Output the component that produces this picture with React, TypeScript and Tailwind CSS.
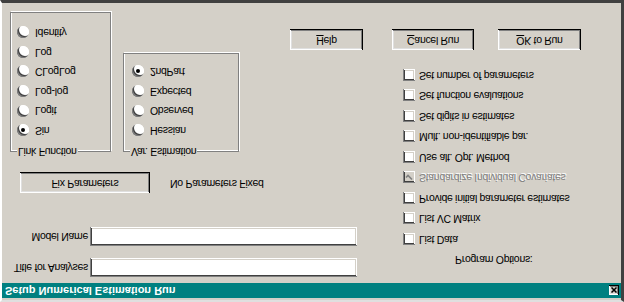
import React from 'react';

// Win95 style dialog. The reference is shown upside-down, so the whole
// window is built the normal way and flipped with -scale-y-100.

const face = 'bg-[#d4d0c8]';

const raised =
  'shadow-[inset_-1px_-1px_0_#000,inset_1px_1px_0_#fff,inset_-2px_-2px_0_#808080,inset_2px_2px_0_#dfdfdf]';
const sunken =
  'shadow-[inset_1px_1px_0_#808080,inset_-1px_-1px_0_#fff,inset_2px_2px_0_#404040,inset_-2px_-2px_0_#d4d0c8]';

const Radio = ({ label, checked = false }: { label: string; checked?: boolean }) => (
  <div className="flex items-center h-[19.6px]">
    <span className="relative w-3 h-3 shrink-0 rounded-full bg-white shadow-[inset_1px_1px_0_#808080,inset_2px_2px_0_#404040,inset_-1px_-1px_0_#fff]">
      {checked && (
        <span className="absolute left-[4px] top-[4px] w-1 h-1 rounded-full bg-black" />
      )}
    </span>
    <span className="ml-[6px] whitespace-nowrap">{label}</span>
  </div>
);

const Check = ({
  label,
  checked = false,
  disabled = false,
}: {
  label: string;
  checked?: boolean;
  disabled?: boolean;
}) => (
  <div className="flex items-center h-[20.5px]">
    <span
      className={`relative w-[12px] h-[12px] shrink-0 ${
        disabled ? 'bg-[#d4d0c8]' : 'bg-white'
      } ${sunken}`}
    >
      {checked && (
        <svg className="absolute left-[2px] top-[2px]" width="8" height="8" viewBox="0 0 8 8">
          <path
            d="M1 3.5 L3 5.5 L7 1.5"
            fill="none"
            stroke={disabled ? '#808080' : '#000'}
            strokeWidth="1.6"
          />
        </svg>
      )}
    </span>
    <span
      className={`ml-[4px] whitespace-nowrap ${
        disabled ? 'text-[#808080] [text-shadow:1px_1px_0_#fff]' : 'text-black'
      }`}
    >
      {label}
    </span>
  </div>
);

const Button = ({
  children,
  className = '',
}: {
  children: React.ReactNode;
  className?: string;
}) => (
  <div
    className={`flex items-center justify-center shrink-0 h-[21px] ${face} ${raised} ${className}`}
  >
    {children}
  </div>
);

const GroupBox = ({
  label,
  className = '',
  children,
}: {
  label: string;
  className?: string;
  children: React.ReactNode;
}) => (
  <div
    className={`relative shrink-0 border border-[#808080] shadow-[1px_1px_0_#fff,inset_1px_1px_0_#fff] ${className}`}
  >
    <span className="absolute -top-[7px] left-[6px] px-[1px] leading-[13px] bg-[#d4d0c8] whitespace-nowrap">
      {label}
    </span>
    {children}
  </div>
);

export default function App() {
  return (
    <div className="w-[624px] h-[302px] overflow-hidden bg-white">
      <div
        className={`-scale-y-100 w-[624px] h-[302px] flex flex-col ${face} border-l-2 border-t-2 border-l-[#fff] border-t-[#dfdfdf] border-r-[3px] border-b-[3px] border-r-[#404040] border-b-[#404040] text-[10.5px] tracking-[-0.3px] text-black font-['Liberation_Sans',Arial,sans-serif]`}
      >
        {/* title bar */}
        <div className="mt-[2px] h-[15px] flex items-center bg-[#008080] pl-[3px] pr-[2px]">
          <span className="font-bold text-white text-[11px] tracking-normal leading-none whitespace-nowrap">
            Setup Numerical Estimation Run
          </span>
          <div
            className={`ml-auto w-[10px] h-[10px] flex items-center justify-center ${face} ${raised}`}
          >
            <svg width="6" height="6" viewBox="0 0 6 6">
              <path d="M0.5 0.5 L5.5 5.5 M5.5 0.5 L0.5 5.5" stroke="#000" strokeWidth="1.5" />
            </svg>
          </div>
        </div>

        <div className="flex flex-1">
          {/* left column */}
          <div className="w-[288px] shrink-0 pl-[8px] flex flex-col">
            <div className="mt-[6px] flex items-center h-[19px]">
              <span className="w-[78px] shrink-0 text-right whitespace-nowrap">Title for Analyses</span>
              <div className={`ml-[2px] w-[267px] h-[19px] bg-white shrink-0 ${sunken}`} />
            </div>
            <div className="mt-[12px] flex items-center h-[19px]">
              <span className="w-[78px] shrink-0 text-right whitespace-nowrap">Model Name</span>
              <div className={`ml-[2px] w-[267px] h-[19px] bg-white shrink-0 ${sunken}`} />
            </div>
            <div className="mt-[34px] flex items-center h-[20px]">
              <Button className="ml-[10px] w-[130px] h-[20px]">Fix Parameters</Button>
              <span className="ml-[20px] whitespace-nowrap">No Parameters Fixed</span>
            </div>
            <div className="mt-[21px] flex items-start">
              <GroupBox label="Link Function" className="w-[101px] h-[140px] pl-[6px] pt-[11px]">
                <Radio label="Sin" checked />
                <Radio label="Logit" />
                <Radio label="Log-log" />
                <Radio label="CLogLog" />
                <Radio label="Log" />
                <Radio label="Identity" />
              </GroupBox>
              <GroupBox label="Var. Estimation" className="ml-[12px] w-[116px] h-[99px] pl-[8px] pt-[11px]">
                <Radio label="Hessian" />
                <Radio label="Observed" />
                <Radio label="Expected" />
                <Radio label="2ndPart" checked />
              </GroupBox>
            </div>
          </div>

          {/* right column */}
          <div className="flex-1 flex flex-col">
            <div className="mt-[16px] h-[14px] leading-[14px] pl-[165px] whitespace-nowrap">
              Program Options:
            </div>
            <div className="mt-[4px] pl-[113px] flex flex-col">
              <Check label="List Data" />
              <Check label="List VC Matrix" />
              <Check label="Provide initial parameter estimates" />
              <Check label="Standardize Individual Covariates" checked disabled />
              <Check label="Use alt. Opt. Method" />
              <Check label="Mult. non-identifiable par." />
              <Check label="Set digits in estimates" />
              <Check label="Set function evaluations" />
              <Check label="Set number of parameters" />
            </div>
            <div className="mt-[14px] flex items-center">
              <Button className="w-[73px]">
                <span>
                  <span className="underline">H</span>elp
                </span>
              </Button>
              <Button className="ml-[29px] w-[82px] shadow-[inset_-1px_-1px_0_#000,inset_-2px_-2px_0_#000,inset_1px_1px_0_#fff,inset_-3px_-3px_0_#808080]">
                <span>
                  <span className="underline">C</span>ancel Run
                </span>
              </Button>
              <Button className="ml-[24px] w-[83px] shadow-[inset_-1px_-1px_0_#000,inset_-2px_-2px_0_#000,inset_1px_1px_0_#fff,inset_-3px_-3px_0_#808080]">
                <span>
                  <span className="underline">O</span>K to Run
                </span>
              </Button>
            </div>
          </div>
        </div>
      </div>
    </div>
  );
}
